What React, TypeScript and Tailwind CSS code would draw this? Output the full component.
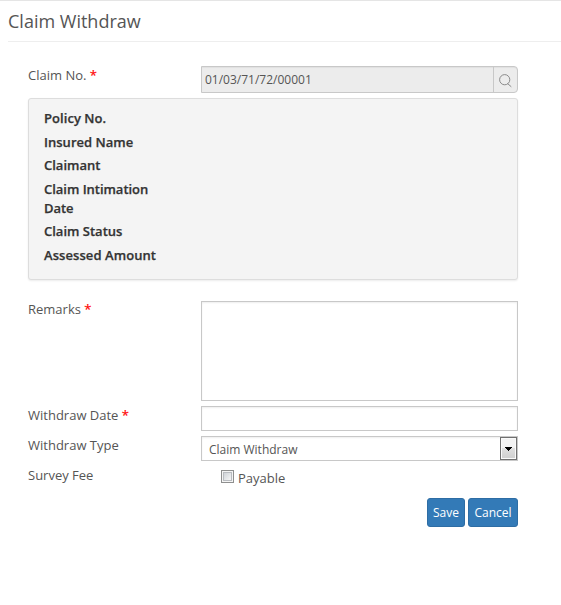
import React from "react";

const Star = () => <span className="font-medium text-[#ff0000] [-webkit-text-stroke:0.2px_#f00]">*</span>;

const details: [string, string][] = [
  ["Policy No.", "h-6 tracking-[0.05px]"],
  ["Insured Name", "h-[23px] tracking-[0.02px]"],
  ["Claimant", "h-6"],
  ["Claim Intimation Date", "h-[42px] tracking-[-0.03px]"],
  ["Claim Status", "h-6"],
  ["Assessed Amount", "h-6 tracking-[0.07px]"],
];

export default function App() {
  return (
    <div className="h-[605px] w-[561px] overflow-hidden border-t border-[#e5e5e5] bg-white font-['Open_Sans',sans-serif] text-[13px] leading-[19px] text-[#555]">
      <header className="ml-2 h-[41px] border-b border-[#eee] pt-2 text-[18px] leading-[25px]">
        Claim Withdraw
      </header>
      <form className="ml-7 w-[490px] pt-6">
        <div className="flex h-8">
          <label className="w-[173px]">Claim No. <Star /></label>
          <div className="flex h-[27px] w-[317px] rounded-r-[4px] border border-[#c8c8c8] bg-[#ececec] shadow-[inset_0_1px_1px_rgba(0,0,0,0.05)]">
            <span className="flex-1 pl-[3px] pt-[3px] text-[12px]">01/03/71/72/00001</span>
            <button type="button" className="flex w-6 border-l border-[#c8c8c8] pl-[5px] pt-[7px]" aria-label="Search">
              <svg width="14" height="14" viewBox="0 0 14 14" fill="none" stroke="#8a8a8a">
                <circle cx="5.7" cy="5.7" r="5.1" />
                <path d="m8.5 9.5 3.8 3.3" />
              </svg>
            </button>
          </div>
        </div>
        <section className="h-[182px] rounded-[3px] border border-[#ddd] bg-[#f4f4f4] pl-[15px] pt-[10px] font-semibold text-[#333] shadow-[0_1px_2px_rgba(0,0,0,0.08)] [-webkit-text-stroke:0.25px_#333]">
          {details.map(([name, style]) => (
            <div key={name} className={"w-[125px] " + style}>{name}</div>
          ))}
        </section>
        <div className="mt-5 flex h-[106px]">
          <label className="w-[173px]">Remarks <Star /></label>
          <textarea className="mt-px block h-[100px] w-[317px] resize-none border border-[#c8c8c8] shadow-[inset_0_1px_2px_rgba(0,0,0,0.07)]" />
        </div>
        <div className="flex h-[30px]">
          <label className="w-[173px]">Withdraw Date <Star /></label>
          <input className="h-[25px] w-[317px] border border-[#c8c8c8] shadow-[inset_0_1px_2px_rgba(0,0,0,0.07)]" />
        </div>
        <div className="flex h-[30px]">
          <label className="w-[173px]">Withdraw Type</label>
          <div className="flex h-[25px] w-[317px] border border-[#c8c8c8] shadow-[inset_0_1px_2px_rgba(0,0,0,0.07)]">
            <span className="flex-1 pl-[7px] pt-[3px] text-[12px]">Claim Withdraw</span>
            <span className="flex h-[23px] w-[17px] items-center justify-center border border-[#707070] bg-linear-to-b from-[#f3f3f3] from-50% via-[#dfdfdf] via-50% to-[#cfcfcf] shadow-[inset_0_0_0_1px_#fafafa]">
              <svg width="7" height="4" shapeRendering="crispEdges"><path d="M0 0h7v1H0zM1 1h5v1H1zM2 2h3v1H2zM3 3h1v1H3z" fill="#000" /></svg>
            </span>
          </div>
        </div>
        <div className="flex h-8">
          <label className="w-[193px]">Survey Fee</label>
          <span className="mt-[4px] flex h-[13px] w-[13px] items-center justify-center border border-[#8e8f8f] bg-[#f4f4f4]">
            <span className="h-[9px] w-[9px] border border-[#b9bcc0] bg-linear-to-br from-[#cfd3d8] to-[#f6f6f6]" />
          </span>
          <span className="ml-1 mt-[3px]">Payable</span>
        </div>
        <div className="flex justify-end gap-[3px] text-[12px] text-white">
          <button type="button" className="h-[29px] w-[38px] rounded-[3px] border border-[#2e6da4] bg-[#337ab7]">Save</button>
          <button type="button" className="h-[29px] w-[50px] rounded-[3px] border border-[#2e6da4] bg-[#337ab7]">Cancel</button>
        </div>
      </form>
    </div>
  );
}
